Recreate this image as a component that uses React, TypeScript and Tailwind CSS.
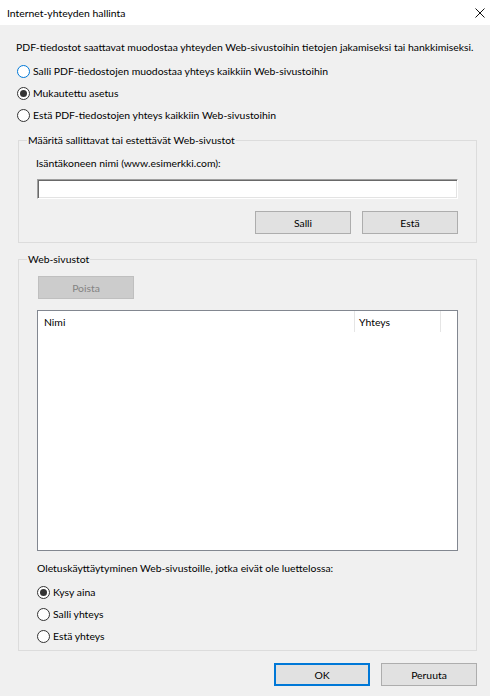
import React from "react";

// Win10 style radio button
function Radio({ checked, hot, label }: { checked?: boolean; hot?: boolean; label: string }) {
  return (
    <div className="flex h-[22px] items-center">
      <span
        className={`flex h-[13px] w-[13px] items-center justify-center rounded-full border bg-white ${
          hot ? "border-[#0078d7]" : "border-[#333333]"
        }`}
      >
        {checked && <span className="h-[7px] w-[7px] rounded-full bg-[#333333]" />}
      </span>
      <span className="ml-[3px]">{label}</span>
    </div>
  );
}

function Button({ label, primary, disabled }: { label: string; primary?: boolean; disabled?: boolean }) {
  const tone = disabled
    ? "bg-[#cccccc] border border-[#bfbfbf] text-[#838383]"
    : primary
      ? "bg-[#e1e1e1] border-2 border-[#0078d7] text-black"
      : "bg-[#e1e1e1] border border-[#adadad] text-black";
  return (
    <button type="button" className={`h-[23px] w-[96px] ${tone}`} disabled={disabled}>
      {label}
    </button>
  );
}

export default function App() {
  return (
    <div
      className="flex h-[696px] w-[490px] flex-col bg-[#f0f0f0] text-[10.4px] leading-[16px] text-black"
      style={{ fontFamily: 'Lato, "Liberation Sans", sans-serif' }}
    >
      {/* Title bar */}
      <div className="flex h-[25px] items-center justify-between bg-white pl-[7px] pr-[3px]">
        <span>Internet-yhteyden hallinta</span>
        <svg width="10" height="10" viewBox="0 0 10 10" className="mr-[2px]">
          <path d="M0.5 0.5 L9.5 9.5 M9.5 0.5 L0.5 9.5" stroke="#111" strokeWidth="1" fill="none" />
        </svg>
      </div>

      <div className="flex flex-1 flex-col pl-[18px] pr-[13px]">
        <p className="-ml-[2px] mt-[14px] h-[16px] whitespace-nowrap">
          PDF-tiedostot saattavat muodostaa yhteyden Web-sivustoihin tietojen jakamiseksi tai hankkimiseksi.
        </p>
        <div className="-ml-[1px] mt-[5px]">
          <Radio hot label="Salli PDF-tiedostojen muodostaa yhteys kaikkiin Web-sivustoihin" />
          <Radio checked label="Mukautettu asetus" />
          <Radio label="Estä PDF-tiedostojen yhteys kaikkiin Web-sivustoihin" />
        </div>

        {/* Allowed / blocked sites */}
        <fieldset className="mt-[6px] border border-[#dcdcdc] pb-[8px] pl-[18px] pr-[18px]">
          <legend className="-ml-[10px] px-[1px]">Määritä sallittavat tai estettävät Web-sivustot</legend>
          <div className="-ml-[1px] mt-[7px] h-[16px]">Isäntäkoneen nimi (www.esimerkki.com):</div>
          <input
            type="text"
            className="mt-[8px] block h-[20px] w-full border border-b-white border-l-[#a0a0a0] border-r-white border-t-[#a0a0a0] bg-white shadow-[inset_1px_1px_0_#696969,inset_-1px_-1px_0_#e3e3e3] outline-none"
          />
          <div className="mt-[12px] flex justify-end gap-[11px]">
            <Button label="Salli" />
            <Button label="Estä" />
          </div>
        </fieldset>

        {/* Site list */}
        <fieldset className="mt-[8px] border border-[#dcdcdc] pb-[3px] pl-[18px] pr-[18px]">
          <legend className="-ml-[10px] px-[1px]">Web-sivustot</legend>
          <div className="ml-[1px] mt-[9px]">
            <Button label="Poista" disabled />
          </div>
          <div className="mt-[11px] h-[241px] border border-[#828790] bg-white">
            <div className="flex h-[21px] items-center">
              <div className="flex h-full w-[317px] items-center border-r border-[#e5e5e5] pl-[6px]">Nimi</div>
              <div className="flex h-full w-[86px] items-center border-r border-[#e5e5e5] pl-[4px]">Yhteys</div>
            </div>
          </div>
          <div className="mt-[9px] h-[16px] whitespace-nowrap">
            Oletuskäyttäytyminen Web-sivustoille, jotka eivät ole luettelossa:
          </div>
          <div className="mt-[5px]">
            <Radio checked label="Kysy aina" />
            <Radio label="Salli yhteys" />
            <Radio label="Estä yhteys" />
          </div>
        </fieldset>

        <div className="mt-[12px] flex justify-end gap-[11px]">
          <Button label="OK" primary />
          <Button label="Peruuta" />
        </div>
      </div>
    </div>
  );
}
